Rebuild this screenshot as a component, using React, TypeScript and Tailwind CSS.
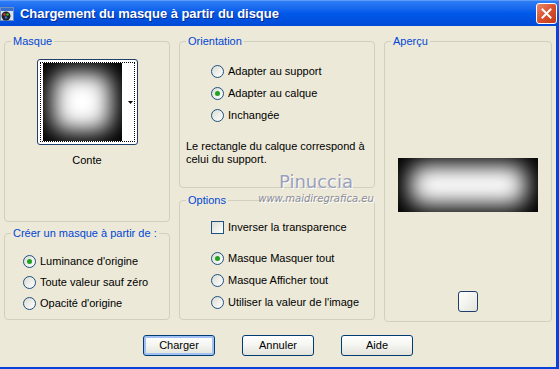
import React from "react";

const font = { fontFamily: '"Liberation Sans", Arial, sans-serif' };

export default function App() {
  return (
    <div className="w-[559px] h-[369px] bg-[#ece9d8] flex flex-col overflow-hidden text-[11px] text-black relative" style={font}>
      {/* Title bar */}
      <div className="h-[26px] shrink-0 flex items-center bg-gradient-to-b from-[#2f7df5] via-[#0058e8] to-[#004ad6] border-t border-[#5d9cf8]">
        <WindowIcon />
        <span className="ml-[6px] text-white font-bold text-[13px] tracking-[-0.05px] [text-shadow:1px_1px_0_#0a2a8a]">
          Chargement du masque à partir du disque
        </span>
        <div className="ml-auto mr-[2px] w-[21px] h-[21px] rounded-[3px] border border-white bg-gradient-to-br from-[#e9876c] via-[#d9512c] to-[#c03a16] flex items-center justify-center">
          <svg width="11" height="11" viewBox="0 0 11 11">
            <path d="M1.5 1.5 L9.5 9.5 M9.5 1.5 L1.5 9.5" stroke="white" strokeWidth="2" strokeLinecap="square" />
          </svg>
        </div>
      </div>

      {/* Body */}
      <div className="flex-1 flex flex-col border-r-[3px] border-b-[2px] border-[#0842d8]">
        <div className="flex gap-[9px] pl-[4px] pt-[15px]">
          {/* Left column */}
          <div className="w-[166px] flex flex-col gap-[11px]">
            <Group label="Masque" className="h-[181px]">
              <div className="flex flex-col items-center pt-[17px]">
                <div className="w-[101px] h-[86px] rounded-[3px] border border-[#1f3e6b] bg-white p-[2px]">
                  <div className="w-full h-full border border-dotted border-black flex items-center pl-[2px]">
                    <div className="w-[79px] h-[78px] bg-black overflow-hidden flex items-center justify-center">
                      <div className="w-[58px] h-[58px] bg-white rounded-[12px] blur-[11px]" />
                    </div>
                    <div className="flex-1 h-full flex items-center justify-end pr-[1px]">
                      <svg width="5" height="3" viewBox="0 0 5 3">
                        <path d="M0 0 L5 0 L2.5 3 Z" fill="black" />
                      </svg>
                    </div>
                  </div>
                </div>
                <span className="mt-[9px] leading-[13px]">Conte</span>
              </div>
            </Group>
            <Group label="Créer un masque à partir de :" className="h-[87px]">
              <div className="flex flex-col gap-[8px] pl-[18px] pt-[21px]">
                <RadioRow label="Luminance d'origine" checked />
                <RadioRow label="Toute valeur sauf zéro" />
                <RadioRow label="Opacité d'origine" />
              </div>
            </Group>
          </div>

          {/* Middle column */}
          <div className="w-[196px] flex flex-col gap-[12px]">
            <Group label="Orientation" className="h-[147px]">
              <div className="flex flex-col gap-[9px] pl-[31px] pt-[23px]">
                <RadioRow label="Adapter au support" />
                <RadioRow label="Adapter au calque" checked />
                <RadioRow label="Inchangée" />
              </div>
              <p className="pl-[6px] pt-[18px] leading-[13px]">
                Le rectangle du calque correspond à
                <br />
                celui du support.
              </p>
            </Group>
            <Group label="Options" className="h-[120px]">
              <div className="flex flex-col pl-[31px] pt-[20px]">
                <div className="flex items-center gap-[4px] h-[13px]">
                  <span className="w-[13px] h-[13px] border border-[#1c5180] bg-gradient-to-br from-[#dcdcd4] to-white shrink-0" />
                  <span className="leading-[13px]">Inverser la transparence</span>
                </div>
                <div className="flex flex-col gap-[9px] mt-[18px]">
                  <RadioRow label="Masque Masquer tout" checked />
                  <RadioRow label="Masque Afficher tout" />
                  <RadioRow label="Utiliser la valeur de l'image" />
                </div>
              </div>
            </Group>
          </div>

          {/* Right column */}
          <div className="w-[168px]">
            <Group label="Aperçu" className="h-[281px] flex flex-col items-center">
              <div className="mt-[116px] w-[140px] h-[54px] bg-black overflow-hidden flex items-center justify-center">
                <div className="w-[116px] h-[40px] bg-white rounded-[12px] blur-[11px]" />
              </div>
              <div className="mt-[79px] w-[20px] h-[21px] rounded-[3px] border border-[#1f3e6b] bg-gradient-to-br from-white via-[#f2f2ee] to-[#e4e4dc]" />
            </Group>
          </div>
        </div>

        {/* Buttons */}
        <div className="flex justify-center gap-[27px] mt-[13px]">
          <Button label="Charger" primary />
          <Button label="Annuler" />
          <Button label="Aide" />
        </div>
      </div>

      {/* Watermark */}
      <div className="absolute left-[258px] top-[171px] w-[116px] flex flex-col items-center pointer-events-none" style={{ fontFamily: '"DejaVu Sans", sans-serif' }}>
        <span className="text-[18px] leading-[22px] text-[#9aa0bb] [text-shadow:1px_1px_0_#ffffff]">
          Pinuccia
        </span>
        <span className="text-[10px] leading-[12px] italic text-[#8c8c98] [text-shadow:1px_1px_0_#ffffff]">
          www.maidiregrafica.eu
        </span>
      </div>
    </div>
  );
}

function Group({ label, className = "", children }: { label: string; className?: string; children?: React.ReactNode }) {
  return (
    <div className={`relative border border-[#d0d0bf] rounded-[4px] ${className}`}>
      <span className="absolute -top-[7px] left-[6px] px-[2px] bg-[#ece9d8] text-[#0046d5] leading-[13px] whitespace-nowrap">
        {label}
      </span>
      {children}
    </div>
  );
}

function RadioRow({ label, checked = false }: { label: string; checked?: boolean }) {
  return (
    <div className="flex items-center gap-[4px] h-[13px]">
      <span className="w-[13px] h-[13px] rounded-full border border-[#1c5180] bg-gradient-to-br from-[#dcdcd4] to-white flex items-center justify-center shrink-0">
        {checked && <span className="w-[5px] h-[5px] rounded-full bg-[#21a121]" />}
      </span>
      <span className="leading-[13px] whitespace-nowrap">{label}</span>
    </div>
  );
}

function Button({ label, primary = false }: { label: string; primary?: boolean }) {
  return (
    <div
      className={`w-[72px] h-[21px] rounded-[3px] border border-[#003c74] bg-gradient-to-b from-white via-[#f4f4f0] to-[#e3e3db] flex items-center justify-center ${
        primary ? "shadow-[inset_0_0_0_2px_#9fc1f4]" : ""
      }`}
    >
      <span className="leading-[13px]">{label}</span>
    </div>
  );
}

function WindowIcon() {
  return (
    <svg width="14" height="14" viewBox="0 0 14 14" className="shrink-0">
      <rect x="0.5" y="0.5" width="13" height="13" fill="#d8e4f4" stroke="#6e8fbf" />
      <rect x="1" y="1" width="12" height="3" fill="#3a6fd0" />
      <circle cx="6" cy="9" r="4.5" fill="#222" />
      <circle cx="4.5" cy="7.5" r="1.3" fill="#e03030" />
      <circle cx="7.5" cy="7.5" r="1.3" fill="#30c030" />
      <circle cx="6" cy="10.5" r="1.3" fill="#3070e0" />
    </svg>
  );
}
